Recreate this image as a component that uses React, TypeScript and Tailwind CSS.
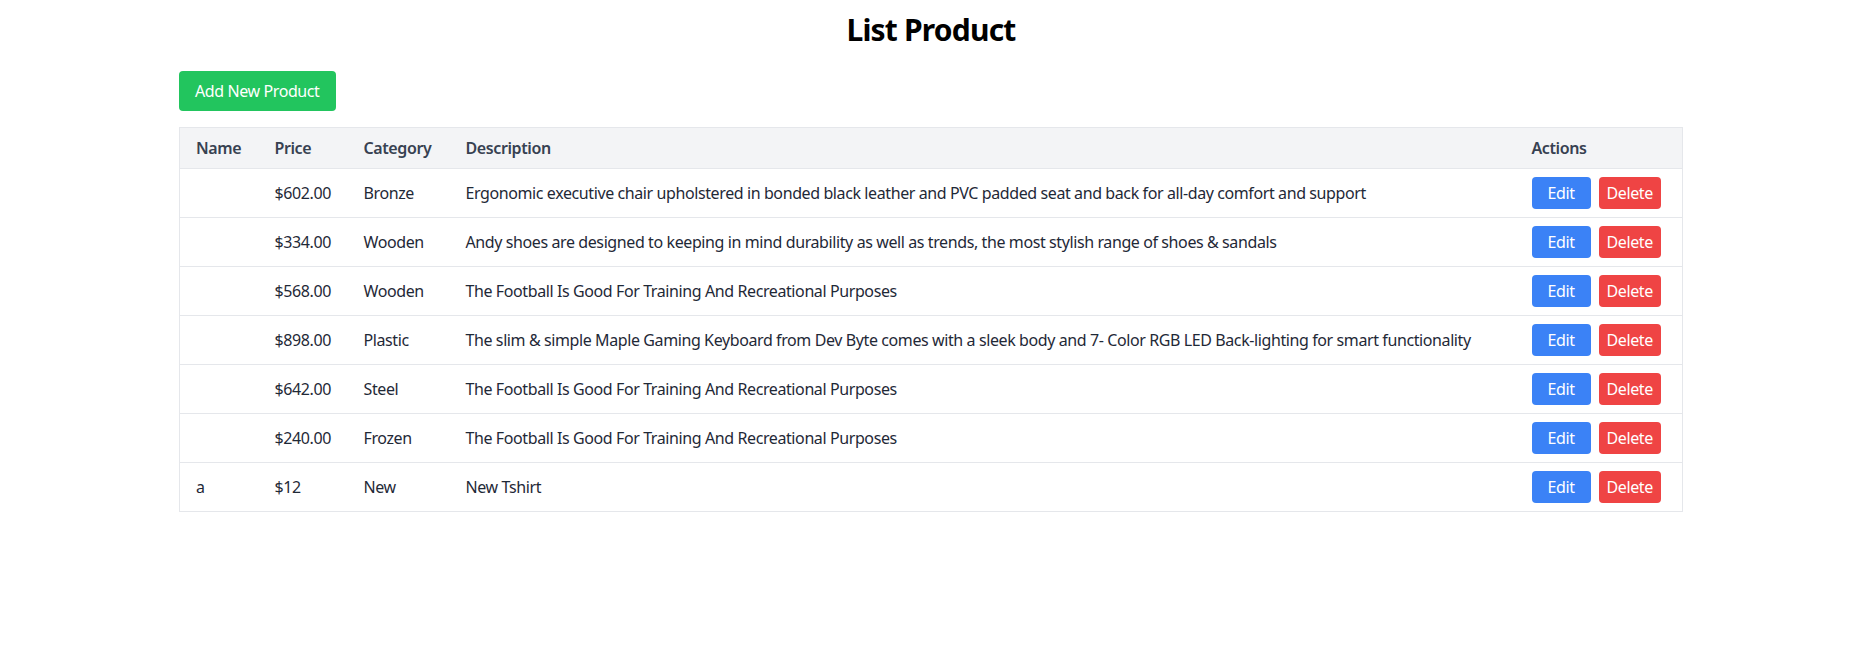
import React from "react";

type Product = {
  name: string;
  price: string;
  category: string;
  description: string;
};

const products: Product[] = [
  {
    name: "",
    price: "$602.00",
    category: "Bronze",
    description:
      "Ergonomic executive chair upholstered in bonded black leather and PVC padded seat and back for all-day comfort and support",
  },
  {
    name: "",
    price: "$334.00",
    category: "Wooden",
    description:
      "Andy shoes are designed to keeping in mind durability as well as trends, the most stylish range of shoes & sandals",
  },
  {
    name: "",
    price: "$568.00",
    category: "Wooden",
    description: "The Football Is Good For Training And Recreational Purposes",
  },
  {
    name: "",
    price: "$898.00",
    category: "Plastic",
    description:
      "The slim & simple Maple Gaming Keyboard from Dev Byte comes with a sleek body and 7- Color RGB LED Back-lighting for smart functionality",
  },
  {
    name: "",
    price: "$642.00",
    category: "Steel",
    description: "The Football Is Good For Training And Recreational Purposes",
  },
  {
    name: "",
    price: "$240.00",
    category: "Frozen",
    description: "The Football Is Good For Training And Recreational Purposes",
  },
  { name: "a", price: "$12", category: "New", description: "New Tshirt" },
];

export default function App() {
  return (
    <div className="min-h-screen bg-white pl-[7px] font-['Noto_Sans',sans-serif] tracking-[-0.4px] text-[#1f2937]">
      <div className="mx-auto w-full max-w-[1536px] px-4 pt-[12px]">
        <h1 className="mb-[23px] text-center text-3xl font-bold tracking-[-0.8px] text-black">List Product</h1>

        <button className="mb-4 rounded bg-[#22c55e] px-4 py-2 text-white">Add New Product</button>

        <table className="w-full table-fixed border border-[#e5e7eb] text-left">
          <thead className="bg-[#f3f4f6]">
            <tr className="border-b border-[#e5e7eb]">
              <th className="w-[79px] px-4 py-2 font-semibold text-[#374151]">Name</th>
              <th className="w-[89px] px-4 py-2 font-semibold text-[#374151]">Price</th>
              <th className="w-[102px] px-4 py-2 font-semibold text-[#374151]">Category</th>
              <th className="px-4 py-2 font-semibold text-[#374151]">Description</th>
              <th className="w-[167px] px-4 py-2 font-semibold text-[#374151]">Actions</th>
            </tr>
          </thead>
          <tbody>
            {products.map((p, i) => (
              <tr key={i} className="border-b border-[#e5e7eb]">
                <td className="px-4 py-3">{p.name}</td>
                <td className="px-4 py-3">{p.price}</td>
                <td className="px-4 py-3">{p.category}</td>
                <td className="whitespace-nowrap px-4 py-3">{p.description}</td>
                <td className="px-4 py-2">
                  <div className="flex gap-2">
                    <button className="rounded bg-[#3b82f6] px-4 py-1 text-white">Edit</button>
                    <button className="rounded bg-[#ef4444] px-2 py-1 text-white">Delete</button>
                  </div>
                </td>
              </tr>
            ))}
          </tbody>
        </table>
      </div>
    </div>
  );
}
